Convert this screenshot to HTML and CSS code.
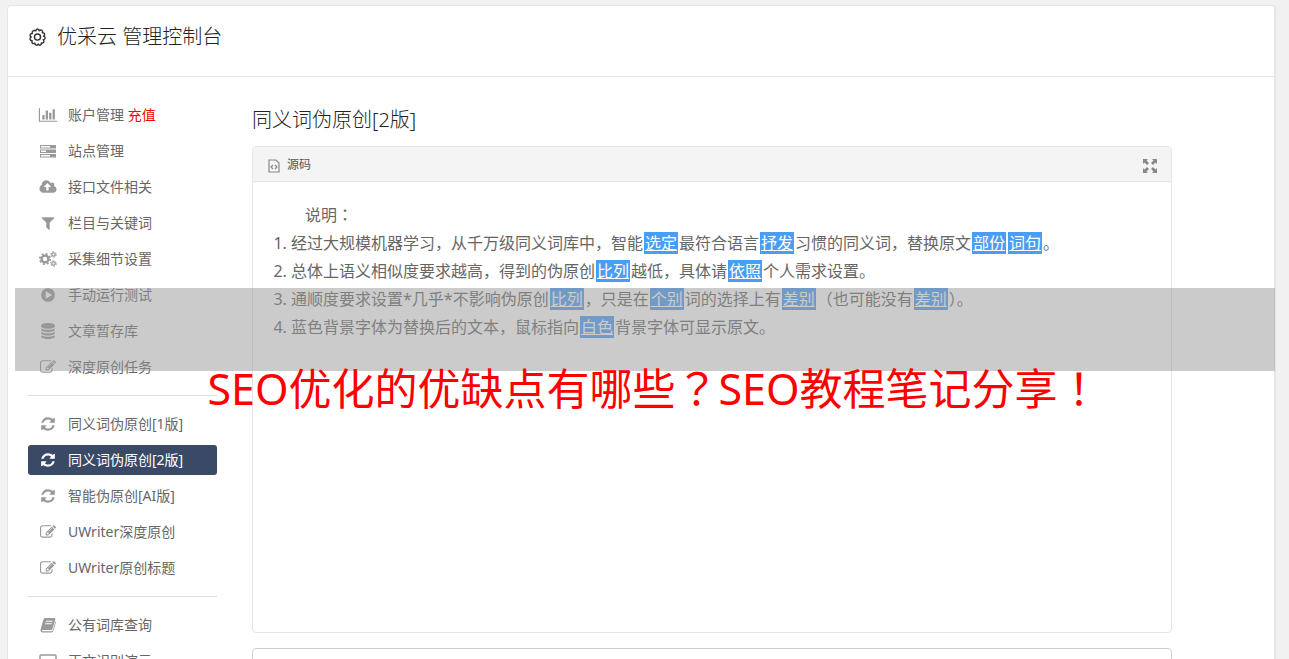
FILE: index.html
```html
<!DOCTYPE html>
<html lang="zh-CN">
<head>
  <meta charset="UTF-8">
  <title>优采云 管理控制台</title>
  <link rel="stylesheet" href="styles.css">
</head>
<body>
  <svg class="sprite" aria-hidden="true">
    <symbol id="i-gear" viewBox="0 0 20 20">
      <path d="M8.2 3Q8.300 1 10 1t1.800 2q1.600-1.500 2.900-.6t.3 2.600q2-.3 2.500 1.200t-1.300 2.300q2 .7 1.900 2t-2.100 1.800q1.400 1.400.6 2.700t-2.600.7q.4 1.900-1 2.400t-2.200-1.200q-.9 1.500-2.300 1.100T7.300 16q-1.600.9-2.700-.1t-.2-2.500q-1.900-.2-2.300-1.600t1.300-2.200Q1.800 8.400 2.200 7t2.400-1.200q-.7-1.800.5-2.700T8.200 3z" fill="none" stroke="currentColor" stroke-width="1.500" stroke-linejoin="round"/>
      <circle cx="10" cy="9.600" r="3.200" fill="none" stroke="currentColor" stroke-width="1.500"/>
    </symbol>
    <symbol id="i-chart" viewBox="0 0 2048 1792"><path d="M640 896v512h-256v-512h256zm384-512v1024h-256v-1024h256zm1024 1152v128h-2048v-1536h128v1408h1920zm-640-896v768h-256v-768h256zm384-384v1152h-256v-1152h256z"/></symbol>
    <symbol id="i-server" viewBox="-1 -1 18 16">
      <path fill-rule="evenodd" d="M0 1h16v3.500H0zM1 2v1.500h9V2zM0 5.500h16V9H0zM1 6.500V8h5V6.500zM0 10h16v3.500H0zM1 11v1.500h9V11z"/>
      <path class="dot" d="M13 2h1.500v1.500H13zM13 6.500h1.500V8H13zM13 11h1.500v1.500H13z"/>
    </symbol>
    <symbol id="i-cloud" viewBox="-64 0 1920 1792"><path d="M1216 864q0-14-9-23l-352-352q-9-9-23-9t-23 9l-351 351q-10 12-10 24 0 14 9 23t23 9h224v352q0 13 9.500 22.500t22.500 9.500h192q13 0 22.500-9.500t9.500-22.500v-352h224q13 0 22.500-9.500t9.500-22.500zm640 288q0 159-112.500 271.500t-271.500 112.500h-1088q-185 0-316.500-131.500t-131.500-316.500q0-130 70-240t188-165q-2-30-2-43 0-212 150-362t362-150q156 0 285.500 87t188.500 231q71-62 166-62 106 0 181 75t75 181q0 76-41 138 130 31 213.500 135.500t83.500 238.500z"/></symbol>
    <symbol id="i-filter" viewBox="0 0 1792 1792"><path d="M1595 295q17 41-14 70l-493 493v742q0 42-39 59-13 5-25 5-27 0-45-19l-256-256q-19-19-19-45v-486l-493-493q-31-29-14-70 17-39 59-39h1280q42 0 59 39z"/></symbol>
    <symbol id="i-cogs" viewBox="0 0 18 16">
      <g fill="none" stroke="currentColor">
        <circle cx="6" cy="8" r="3.400" stroke-width="2.400"/>
        <circle cx="6" cy="8" r="5.200" stroke-width="1.600" stroke-dasharray="2.040 2.040"/>
        <circle cx="14.500" cy="3.500" r="1.700" stroke-width="1.300"/>
        <circle cx="14.500" cy="3.500" r="2.800" stroke-width="1" stroke-dasharray="1.470 1.460"/>
        <circle cx="14.500" cy="12.500" r="1.700" stroke-width="1.300"/>
        <circle cx="14.500" cy="12.500" r="2.800" stroke-width="1" stroke-dasharray="1.470 1.460"/>
      </g>
    </symbol>
    <symbol id="i-play" viewBox="0 0 1792 1792"><path d="M896 128q209 0 385.500 103t279.500 279.500 103 385.500-103 385.500-279.500 279.500-385.500 103-385.500-103-279.500-279.500-103-385.500 103-385.500 279.500-279.500 385.500-103zm384 823q32-18 32-55t-32-55l-544-320q-31-19-64-1-32 19-32 56v640q0 37 32 56 16 8 32 8 17 0 32-9z"/></symbol>
    <symbol id="i-database" viewBox="0 0 1792 1792"><path d="M896 768q237 0 443-43t325-127v170q0 69-103 128t-280 93.500-385 34.500-385-34.500-280-93.500-103-128v-170q119 84 325 127t443 43zm0 768q237 0 443-43t325-127v170q0 69-103 128t-280 93.500-385 34.500-385-34.500-280-93.500-103-128v-170q119 84 325 127t443 43zm0-384q237 0 443-43t325-127v170q0 69-103 128t-280 93.500-385 34.500-385-34.500-280-93.500-103-128v-170q119 84 325 127t443 43zm0-1152q208 0 385 34.500t280 93.500 103 128v128q0 69-103 128t-280 93.500-385 34.500-385-34.500-280-93.500-103-128v-128q0-69 103-128t280-93.500 385-34.500z"/></symbol>
    <symbol id="i-edit" viewBox="0 0 1792 1792"><path d="M888 1184l116-116-152-152-116 116v56h96v96h56zm440-720q-16-16-33 1l-350 350q-17 17-1 33t33-1l350-350q17-17 1-33zm80 594v190q0 119-84.500 203.500t-203.500 84.500h-832q-119 0-203.500-84.500t-84.500-203.500v-832q0-119 84.500-203.500t203.500-84.500h832q63 0 117 25 15 7 18 23 3 17-9 29l-49 49q-14 14-32 8-23-6-45-6h-832q-66 0-113 47t-47 113v832q0 66 47 113t113 47h832q66 0 113-47t47-113v-126q0-13 9-22l64-64q15-15 35-7t20 29zm-96-738l288 288-672 672h-288v-288zm444 132l-92 92-288-288 92-92q28-28 68-28t68 28l152 152q28 28 28 68t-28 68z"/></symbol>
    <symbol id="i-refresh" viewBox="0 0 1792 1792"><path d="M1639 1056q0 5-1 7-64 268-268 434.500t-478 166.500q-146 0-282.500-55t-243.500-157l-129 129q-19 19-45 19t-45-19-19-45v-448q0-26 19-45t45-19h448q26 0 45 19t19 45-19 45l-137 137q71 66 161 102t187 36q134 0 250-65t186-179q11-17 53-117 8-23 30-23h192q13 0 22.500 9.500t9.500 22.500zm25-800v448q0 26-19 45t-45 19h-448q-26 0-45-19t-19-45 19-45l138-138q-148-137-349-137-134 0-250 65t-186 179q-11 17-53 117-8 23-30 23h-199q-13 0-22.500-9.500t-9.500-22.500v-7q65-268 270-434.500t480-166.500q146 0 284 55.500t245 156.500l130-129q19-19 45-19t45 19 19 45z"/></symbol>
    <symbol id="i-book" viewBox="0 0 16 16">
      <path fill-rule="evenodd" d="M5 1h9.500q1.200.3.800 1.500L12.500 12q-.4 1-1.500 1H3q-1 0-1 .7t1 .6h8.500q1 0 1.400-1L15.600 4q.6.600.3 1.500L13.300 14q-.5 1.500-2 1.500H2.800Q.3 15.200.5 12.700L3.300 3Q3.800 1 5 1zM6 3.800l-.3 1h6.600l.3-1zM5.300 6.300l-.3 1h6.600l.3-1z"/>
    </symbol>
    <symbol id="i-laptop" viewBox="0 0 18 16">
      <rect x="1" y="2" width="16" height="10" rx="1" fill="none" stroke="currentColor" stroke-width="1.500"/>
      <path d="M0 13.500h18V15H0z"/>
    </symbol>
    <symbol id="i-source" viewBox="0 0 12 14">
      <path d="M1 1h7l3 3v9H1z" fill="none" stroke="currentColor" stroke-width="1.200"/>
      <path d="M5 6 3 8l2 2M7 6l2 2-2 2" fill="none" stroke="currentColor" stroke-width="1.200"/>
    </symbol>
    <symbol id="i-expand" viewBox="0 0 14 14">
      <path d="M0 0h5L3.500 1.500 6 4 4 6 1.500 3.500 0 5zM14 0v5l-1.500-1.500L10 6 8 4l2.500-2.500L9 0zM0 14V9l1.500 1.500L4 8l2 2-2.500 2.500L5 14zM14 14H9l1.500-1.500L8 10l2-2 2.500 2.500L14 9z"/>
    </symbol>
  </svg>

  <div class="panel">
    <header class="panel-head">
      <svg class="gear"><use href="#i-gear"/></svg>
      <h1>优采云 管理控制台</h1>
    </header>

    <div class="panel-body">
      <nav class="sidebar">
        <ul>
          <li><a href="#"><svg><use href="#i-chart"/></svg>账户管理 <span class="recharge">充值</span></a></li>
          <li><a href="#"><svg><use href="#i-server"/></svg>站点管理</a></li>
          <li><a href="#"><svg><use href="#i-cloud"/></svg>接口文件相关</a></li>
          <li><a href="#"><svg><use href="#i-filter"/></svg>栏目与关键词</a></li>
          <li><a href="#"><svg><use href="#i-cogs"/></svg>采集细节设置</a></li>
          <li><a href="#"><svg><use href="#i-play"/></svg>手动运行测试</a></li>
          <li><a href="#"><svg><use href="#i-database"/></svg>文章暂存库</a></li>
          <li><a href="#"><svg><use href="#i-edit"/></svg>深度原创任务</a></li>
        </ul>
        <ul>
          <li><a href="#"><svg><use href="#i-refresh"/></svg>同义词伪原创[1版]</a></li>
          <li><a href="#" class="active"><svg><use href="#i-refresh"/></svg>同义词伪原创[2版]</a></li>
          <li><a href="#"><svg><use href="#i-refresh"/></svg>智能伪原创[AI版]</a></li>
          <li><a href="#"><svg><use href="#i-edit"/></svg>UWriter深度原创</a></li>
          <li><a href="#"><svg><use href="#i-edit"/></svg>UWriter原创标题</a></li>
        </ul>
        <ul>
          <li><a href="#"><svg><use href="#i-book"/></svg>公有词库查询</a></li>
          <li><a href="#"><svg><use href="#i-laptop"/></svg>正文识别演示</a></li>
        </ul>
      </nav>

      <main class="content">
        <h2>同义词伪原创[2版]</h2>
        <div class="editor">
          <div class="toolbar">
            <button type="button" class="tool"><svg class="icon-source"><use href="#i-source"/></svg>源码</button>
            <button type="button" class="tool" aria-label="全屏"><svg class="icon-expand"><use href="#i-expand"/></svg></button>
          </div>
          <div class="editor-text">
            <p>说明<span lang="zh-TW">：</span></p>
            <ol>
              <li>经过大规模机器学习，从千万级同义词库中，智能<u>选定</u>最符合语言<u>抒发</u>习惯的同义词，替换原文<u>部份</u><u>词句</u>。</li>
              <li>总体上语义相似度要求越高，得到的伪原创<u>比列</u>越低，具体请<u>依照</u>个人需求设置。</li>
              <li>通顺度要求设置*几乎*不影响伪原创<u>比列</u>，只是在<u>个别</u>词的选择上有<u>差别</u>（也可能没有<u>差别</u>）。</li>
              <li>蓝色背景字体为替换后的文本，鼠标指向<u>白色</u>背景字体可显示原文。</li>
            </ol>
          </div>
        </div>
        <textarea class="source" aria-label="原文"></textarea>
      </main>
    </div>
  </div>

  <div class="banner">
    <div class="shade"></div>
    <p>SEO优化的优缺点有哪些<span lang="zh-TW">？</span>SEO教程笔记分享<span lang="zh-TW">！</span></p>
  </div>
</body>
</html>
```
FILE: styles.css
```css
* {
  box-sizing: border-box;
}
body {
  margin: 0;
  padding: 5px 13px 0 7px;
  height: 100vh;
  overflow: hidden;
  position: relative;
  background: #f1f1f1;
  color: #666;
  font-family: "Noto Sans", "Noto Sans CJK SC", sans-serif;
  font-size: 14px;
}
h1, h2, p, ul, ol {
  margin: 0;
  padding: 0;
}
svg {
  fill: currentColor;
}
.sprite {
  display: none;
}
/* full-width marks centred in their square */
span[lang="zh-TW"] {
  font-family: "Noto Sans CJK TC", sans-serif;
  line-height: 1;
}
.panel {
  background: #fff;
  border: 1px solid #e5e5e5;
  border-right-width: 2px;
  border-radius: 4px;
  min-height: 100vh;
}
.panel-head {
  display: flex;
  align-items: center;
  gap: 10px;
  height: 71px;
  padding: 0 20px 8px;
  border-bottom: 1px solid #e5e5e5;
  color: #333;
}
.gear {
  width: 19px;
  height: 19px;
}
h1, h2 {
  font-size: 20px;
  font-weight: 300;
  line-height: 30px;
  color: #222;
}
.panel-body {
  display: flex;
  gap: 35px;
  padding: 23px 102px 0 20px;
}

/* sidebar */
.sidebar {
  width: 189px;
  flex: none;
}
.sidebar ul {
  list-style: none;
  display: grid;
  gap: 6px;
}
.sidebar ul + ul {
  margin-top: 13px;
  padding-top: 13px;
  border-top: 1px solid #ddd;
}
.sidebar a {
  display: flex;
  align-items: center;
  height: 30px;
  padding: 0 0 2px 10px;
  border-radius: 3px;
  color: #666;
  text-decoration: none;
  white-space: pre;
}
.sidebar svg {
  width: 20px;
  height: 16px;
  margin: 2px 10px 0 0;
  color: #999;
}
.sidebar .dot {
  fill: #fff;
}
.sidebar .active,
.sidebar .active svg {
  background: #3a4a66;
  color: #fff;
}
.sidebar .recharge {
  color: #f00;
}

/* editor */
.content {
  flex: 1;
  padding-top: 5px;
}
.editor {
  margin-top: 11px;
  min-height: 487px;
  border: 1px solid #e5e5e5;
  border-radius: 4px;
}
.toolbar {
  display: flex;
  justify-content: space-between;
  height: 35px;
  padding: 0 14px 0 15px;
  background: #f4f4f4;
  border-bottom: 1px solid #e5e5e5;
}
.tool {
  display: flex;
  align-items: center;
  gap: 7px;
  padding: 0;
  border: 0;
  background: none;
  color: #555;
  font: inherit;
  font-size: 12px;
}
.tool svg {
  margin-top: 4px;
  height: 14px;
  color: #888;
}
.icon-source {
  width: 12px;
}
.icon-expand {
  width: 14px;
}
.editor-text {
  padding: 19px 20px;
  font-size: 16px;
  line-height: 28px;
}
.editor-text p {
  text-indent: 2em;
}
.editor-text ol {
  padding-left: 18px;
}
.editor-text u {
  margin: 0 1px;
  padding: 0 1px;
  background: #4a9df5;
  color: #fff;
}
.source {
  display: block;
  width: 100%;
  height: 120px;
  margin-top: 15px;
  border: 1px solid #ccc;
  border-radius: 4px;
  resize: none;
}

/* banner laid over the page */
.banner {
  position: absolute;
  top: 288px;
  left: 15px;
  right: 14px;
}
.shade {
  height: 83px;
  background: rgba(151, 151, 151, 0.5);
}
.banner p {
  margin-top: -12px;
  padding-left: 18px;
  color: #f00;
  font-size: 43px;
  line-height: 60px;
  text-align: center;
  white-space: nowrap;
}
```
